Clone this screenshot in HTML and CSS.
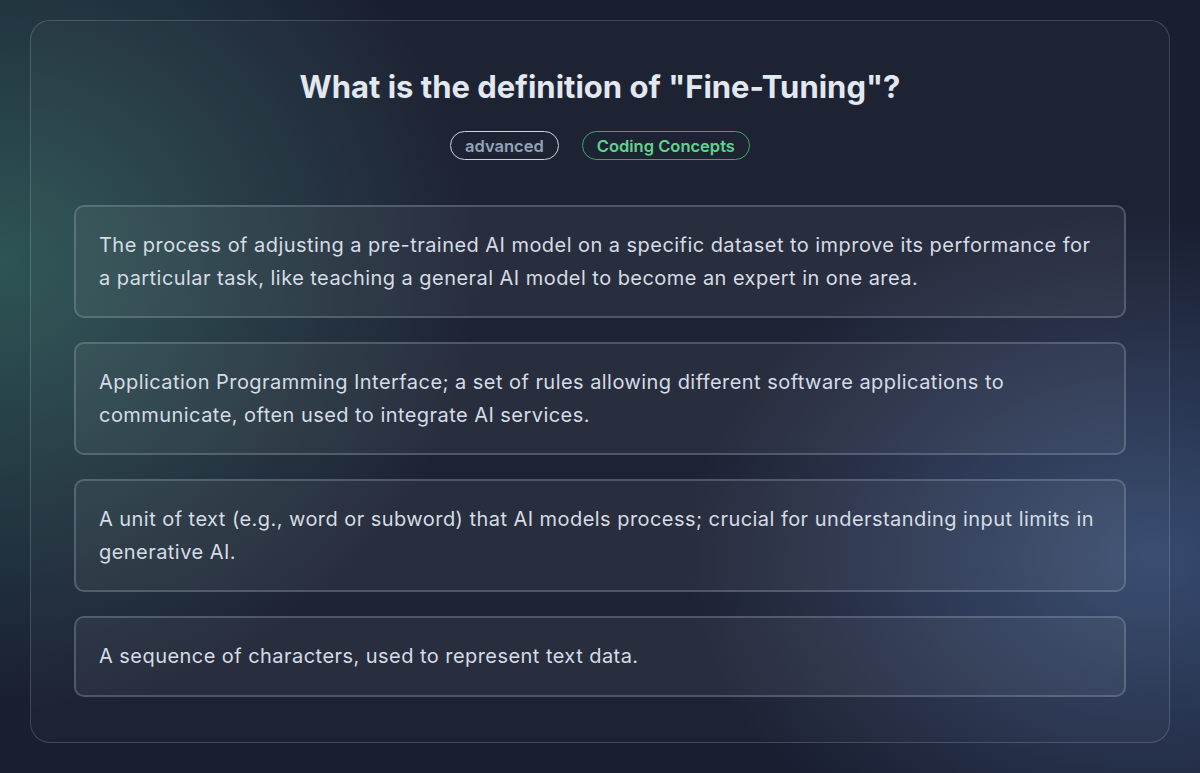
FILE: index.html
```html
<!DOCTYPE html>
<html lang="en">
<head>
<meta charset="utf-8">
<title>Quiz</title>
<link rel="stylesheet" href="styles.css">
</head>
<body>
<main class="card">
  <h1 class="title">What is the definition of "Fine-Tuning"?</h1>
  <div class="tags">
    <span class="tag tag-level">advanced</span>
    <span class="tag tag-topic">Coding Concepts</span>
  </div>
  <div class="options">
    <div class="option">The process of adjusting a pre-trained AI model on a specific dataset to improve its performance for a particular task, like teaching a general AI model to become an expert in one area.</div>
    <div class="option">Application Programming Interface; a set of rules allowing different software applications to communicate, often used to integrate AI services.</div>
    <div class="option">A unit of text (e.g., word or subword) that AI models process; crucial for understanding input limits in generative AI.</div>
    <div class="option">A sequence of characters, used to represent text data.</div>
  </div>
</main>
</body>
</html>
```

FILE: styles.css
```css
* { box-sizing: border-box; }
html, body { height: 100%; }
body {
  margin: 0;
  padding: 20px 30px;
  font-family: Inter, "Noto Sans", sans-serif;
  color: #e2e8f0;
  background:
    radial-gradient(ellipse 640px 600px at 0% 34%, rgba(58, 118, 108, 0.62), rgba(58, 118, 108, 0) 75%),
    radial-gradient(ellipse 620px 460px at 96% 72%, rgba(74, 104, 152, 0.6), rgba(74, 104, 152, 0) 75%),
    #191e30;
}
.card {
  border: 1px solid rgba(255, 255, 255, 0.16);
  border-radius: 20px;
  background: rgba(255, 255, 255, 0.025);
  padding: 47px 43px 45px;
  display: flex;
  flex-direction: column;
  align-items: center;
}
.title {
  margin: 0;
  font-size: 31px;
  line-height: 38px;
  font-weight: 700;
  color: #e2e8f0;
  text-align: center;
}
.tags {
  display: flex;
  gap: 23px;
  margin-top: 25px;
}
.tag {
  display: inline-flex;
  align-items: center;
  height: 29px;
  padding: 0 14px;
  border-radius: 999px;
  font-size: 16.5px;
  font-weight: 600;
}
.tag-level {
  border: 1.5px solid #cbd5e1;
  color: #94a3b8;
}
.tag-topic {
  border: 1.5px solid rgba(74, 222, 128, 0.7);
  color: #5fd38f;
}
.options {
  align-self: stretch;
  display: flex;
  flex-direction: column;
  gap: 24px;
  margin-top: 45px;
}
.option {
  border: 2px solid rgba(148, 163, 184, 0.35);
  border-radius: 10px;
  background: rgba(255, 255, 255, 0.05);
  padding: 22px 23px;
  font-size: 20px;
  letter-spacing: 0.45px;
  line-height: 32.5px;
  color: #d5dce6;
}
```
